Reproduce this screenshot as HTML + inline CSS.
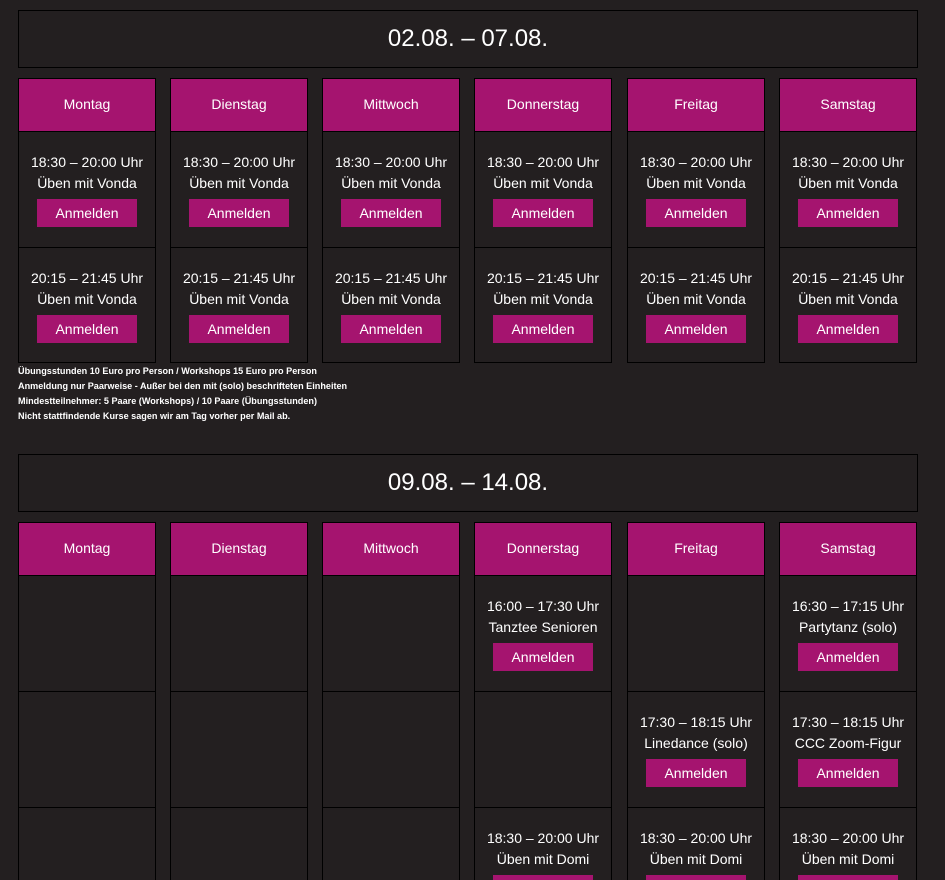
<!DOCTYPE html>
<html style="overflow:hidden;height:880px"><head><meta charset="utf-8"><style>
body{margin:0;background:#231f20;width:945px;height:880px;overflow:hidden;font-family:"Liberation Sans",sans-serif;color:#fff;position:relative}
.hd{position:absolute;left:18px;width:900px;height:58px;border:1px solid #000;box-sizing:border-box;text-align:center;font-size:24px;line-height:56px}
.col{position:absolute;width:138px;border:1px solid #000;box-sizing:border-box;overflow:hidden}
.day{background:#a5146f;height:52px;line-height:51px;text-align:center;font-size:14px;border-bottom:1px solid #000}
.slot{height:116px;border-bottom:1px solid #000;box-sizing:border-box;text-align:center;font-size:14px;line-height:21px;padding-top:20px}
.slot:last-child{border-bottom:none}
.btn{display:block;margin:5px auto 0;width:100px;height:28px;line-height:28px;background:#a5146f}
.notes{position:absolute;left:18px;top:364px;font-size:9.1px;line-height:15px;font-weight:bold}
</style></head><body>
<div class="hd" style="top:10px">02.08. – 07.08.</div>
<div class="col" style="left:18px;top:78px;height:285px"><div class="day">Montag</div><div class="slot">18:30 – 20:00 Uhr<br>Üben mit Vonda<span class="btn">Anmelden</span></div><div class="slot">20:15 – 21:45 Uhr<br>Üben mit Vonda<span class="btn">Anmelden</span></div></div>
<div class="col" style="left:170px;top:78px;height:285px"><div class="day">Dienstag</div><div class="slot">18:30 – 20:00 Uhr<br>Üben mit Vonda<span class="btn">Anmelden</span></div><div class="slot">20:15 – 21:45 Uhr<br>Üben mit Vonda<span class="btn">Anmelden</span></div></div>
<div class="col" style="left:322px;top:78px;height:285px"><div class="day">Mittwoch</div><div class="slot">18:30 – 20:00 Uhr<br>Üben mit Vonda<span class="btn">Anmelden</span></div><div class="slot">20:15 – 21:45 Uhr<br>Üben mit Vonda<span class="btn">Anmelden</span></div></div>
<div class="col" style="left:474px;top:78px;height:285px"><div class="day">Donnerstag</div><div class="slot">18:30 – 20:00 Uhr<br>Üben mit Vonda<span class="btn">Anmelden</span></div><div class="slot">20:15 – 21:45 Uhr<br>Üben mit Vonda<span class="btn">Anmelden</span></div></div>
<div class="col" style="left:627px;top:78px;height:285px"><div class="day">Freitag</div><div class="slot">18:30 – 20:00 Uhr<br>Üben mit Vonda<span class="btn">Anmelden</span></div><div class="slot">20:15 – 21:45 Uhr<br>Üben mit Vonda<span class="btn">Anmelden</span></div></div>
<div class="col" style="left:779px;top:78px;height:285px"><div class="day">Samstag</div><div class="slot">18:30 – 20:00 Uhr<br>Üben mit Vonda<span class="btn">Anmelden</span></div><div class="slot">20:15 – 21:45 Uhr<br>Üben mit Vonda<span class="btn">Anmelden</span></div></div>
<div class="notes">Übungsstunden 10 Euro pro Person / Workshops 15 Euro pro Person<br>Anmeldung nur Paarweise - Außer bei den mit (solo) beschrifteten Einheiten<br>Mindestteilnehmer: 5 Paare (Workshops) / 10 Paare (Übungsstunden)<br>Nicht stattfindende Kurse sagen wir am Tag vorher per Mail ab.</div>
<div class="hd" style="top:454px">09.08. – 14.08.</div>
<div class="col" style="left:18px;top:522px;height:370px"><div class="day">Montag</div><div class="slot"></div><div class="slot"></div><div class="slot"></div></div>
<div class="col" style="left:170px;top:522px;height:370px"><div class="day">Dienstag</div><div class="slot"></div><div class="slot"></div><div class="slot"></div></div>
<div class="col" style="left:322px;top:522px;height:370px"><div class="day">Mittwoch</div><div class="slot"></div><div class="slot"></div><div class="slot"></div></div>
<div class="col" style="left:474px;top:522px;height:370px"><div class="day">Donnerstag</div><div class="slot">16:00 – 17:30 Uhr<br>Tanztee Senioren<span class="btn">Anmelden</span></div><div class="slot"></div><div class="slot">18:30 – 20:00 Uhr<br>Üben mit Domi<span class="btn">Anmelden</span></div></div>
<div class="col" style="left:627px;top:522px;height:370px"><div class="day">Freitag</div><div class="slot"></div><div class="slot">17:30 – 18:15 Uhr<br>Linedance (solo)<span class="btn">Anmelden</span></div><div class="slot">18:30 – 20:00 Uhr<br>Üben mit Domi<span class="btn">Anmelden</span></div></div>
<div class="col" style="left:779px;top:522px;height:370px"><div class="day">Samstag</div><div class="slot">16:30 – 17:15 Uhr<br>Partytanz (solo)<span class="btn">Anmelden</span></div><div class="slot">17:30 – 18:15 Uhr<br>CCC Zoom-Figur<span class="btn">Anmelden</span></div><div class="slot">18:30 – 20:00 Uhr<br>Üben mit Domi<span class="btn">Anmelden</span></div></div>
</body></html>
